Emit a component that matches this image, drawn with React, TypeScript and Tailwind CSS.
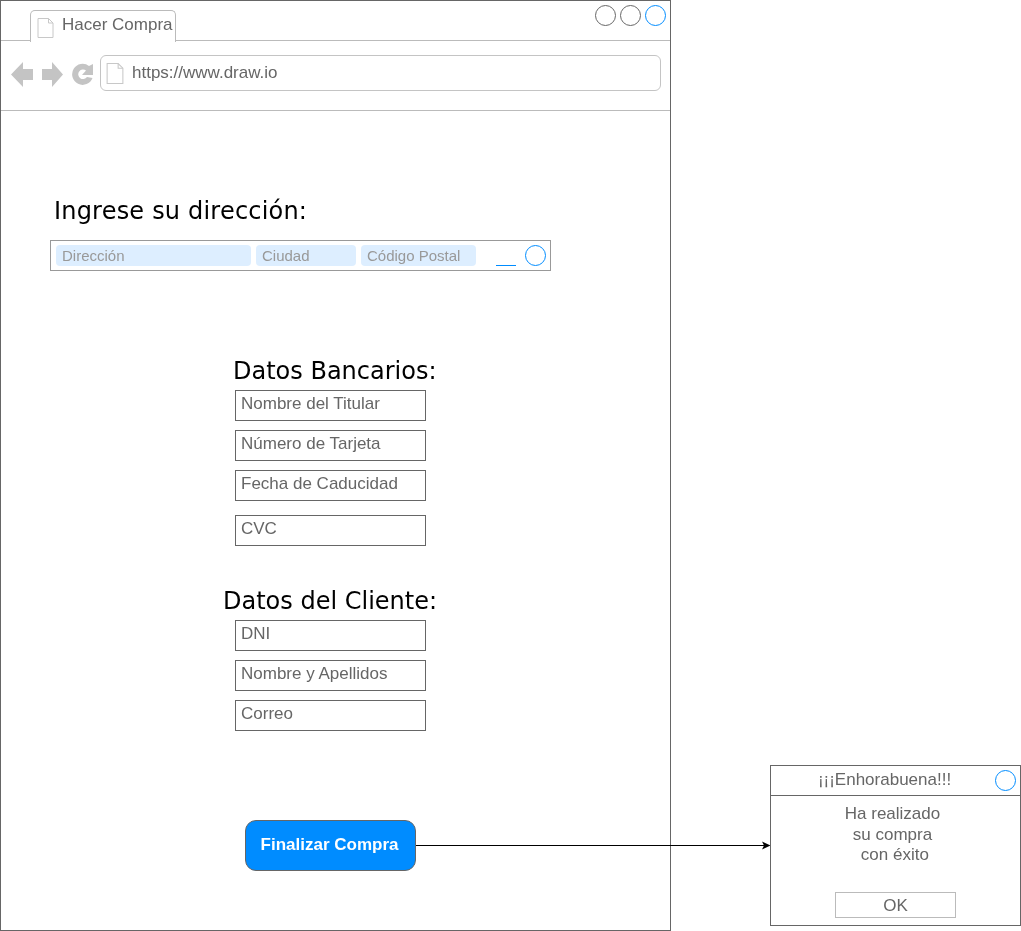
const SANS = 'font-["Liberation_Sans",Arial,sans-serif]';

function PageIcon({ className }: { className: string }) {
  return (
    <svg className={className} viewBox="0 0 17 20" fill="none">
      <path d="M1 .5H11.5L16 5V19.5H1Z" fill="#fff" stroke="#c8c8c8" strokeWidth="1" />
      <path d="M11.5 .5V5H16" stroke="#c8c8c8" strokeWidth="1" />
    </svg>
  );
}

function Circle({ blue }: { blue?: boolean }) {
  return (
    <div className={`w-[21px] h-[21px] rounded-full border ${blue ? 'border-[#008cff]' : 'border-[#666]'}`} />
  );
}

function NavIcons() {
  return (
    <svg width="83" height="26" viewBox="0 0 83 26" className="shrink-0 mt-[7px]">
      <path d="M0 12.5 12 0V7H22V18H12V25Z" fill="#c4c4c4" />
      <path d="M52 12.5 41 0V7H31V18H41V25Z" fill="#c4c4c4" />
      <path d="M82 2V13H71L75 8.5A4.8 4.8 0 1 0 76 15L81.5 16A10.5 10.5 0 1 1 78 4Z" fill="#c4c4c4" />
    </svg>
  );
}

function Heading({ children, className }: { children: string; className: string }) {
  return (
    <h2 className={`font-["DejaVu_Sans",Verdana,sans-serif] text-[24px] leading-[30px] text-black whitespace-nowrap ${className}`}>
      {children}
    </h2>
  );
}

function Field({ label, className = '' }: { label: string; className?: string }) {
  return (
    <div className={`w-[191px] h-[31px] border border-[#666] px-[5px] text-[17px] leading-[26px] text-[#666] whitespace-nowrap ${className}`}>
      {label}
    </div>
  );
}

function Pill({ label, className }: { label: string; className: string }) {
  return (
    <div className={`h-[21px] shrink-0 rounded-[4px] bg-[#ddeeff] px-[6px] text-[15px] leading-[21px] text-[#999] ${className}`}>
      {label}
    </div>
  );
}

export default function App() {
  return (
    <div className={`relative w-[1021px] h-[931px] overflow-hidden will-change-transform ${SANS}`}>
      {/* browser window */}
      <div className="absolute left-0 top-0 w-[671px] h-[931px] border border-[#666] flex flex-col">
        <div className="relative h-[40px] border-b border-[#bbb] shrink-0">
          <div className="absolute left-[29px] top-[9px] w-[146px] h-[32px] border border-b-0 border-[#bbb] rounded-t-[5px] bg-white flex items-center pl-[6px] gap-[8px] text-[17px] text-[#666] whitespace-nowrap">
            <PageIcon className="w-[17px] h-[20px] shrink-0 mt-[2px]" />
            <span className="-mt-[3px]">Hacer Compra</span>
          </div>
          <div className="absolute right-[4px] top-[4px] flex gap-[4px]">
            <Circle />
            <Circle />
            <Circle blue />
          </div>
        </div>
        <div className="h-[70px] border-b border-[#bbb] shrink-0 flex items-start pt-[14px] pl-[10px] pr-[9px] gap-[6px]">
          <NavIcons />
          <div className="flex-1 h-[36px] border border-[#c4c4c4] rounded-[6px] flex items-center pl-[5px] gap-[8px] text-[17px] text-[#666]">
            <PageIcon className="w-[18px] h-[21px] shrink-0" />
            <span>https://www.draw.io</span>
          </div>
        </div>

        <div className="flex-1 relative">
          <div className="pt-[85px] pl-[49px]">
            <Heading className="pl-[4px] tracking-[0.2px]">Ingrese su dirección:</Heading>
            <div className="mt-[14px] w-[501px] h-[31px] border border-[#999] flex items-center pl-[5px] gap-[5px]">
              <Pill label="Dirección" className="w-[195px]" />
              <Pill label="Ciudad" className="w-[100px]" />
              <Pill label="Código Postal" className="w-[115px]" />
              <div className="ml-[15px] w-[20px] h-[20px] border-b border-[#008cff]" />
              <div className="ml-[4px]">
                <Circle blue />
              </div>
            </div>
          </div>

          <div className="pl-[234px] mt-[85px] flex flex-col items-start">
            <Heading className="-ml-[2px] mb-[4px]">Datos Bancarios:</Heading>
            <div className="flex flex-col gap-[9px]">
              <Field label="Nombre del Titular" />
              <Field label="Número de Tarjeta" />
              <Field label="Fecha de Caducidad" />
              <Field label="CVC" className="mt-[5px]" />
            </div>
            <Heading className="-ml-[12px] mt-[40px] mb-[4px]">Datos del Cliente:</Heading>
            <div className="flex flex-col gap-[9px]">
              <Field label="DNI" />
              <Field label="Nombre y Apellidos" />
              <Field label="Correo" />
            </div>
            <button className="ml-[10px] mt-[89px] w-[171px] h-[51px] pb-[2px] pr-[2px] rounded-[11px] border border-[#666] bg-[#008cff] text-white font-bold text-[17px]">
              Finalizar Compra
            </button>
          </div>
        </div>
      </div>

      {/* connector */}
      <svg className="absolute left-[416px] top-[839px]" width="355" height="12" viewBox="0 0 355 12">
        <path d="M0 6.5H348" stroke="#000" strokeWidth="1" />
        <path d="M354.5 6.5 346 2.5 348 6.5 346 10.5Z" fill="#000" />
      </svg>

      {/* popup */}
      <div className="absolute left-[770px] top-[765px] w-[251px] h-[161px] border border-[#666] flex flex-col text-[#666] text-[17px]">
        <div className="relative h-[30px] border-b border-[#666] shrink-0 pr-[22px] text-center leading-[27px]">
          ¡¡¡Enhorabuena!!!
          <div className="absolute right-[4px] top-[4px]">
            <Circle blue />
          </div>
        </div>
        <div className="pt-[8px] pr-[6px] text-center leading-[20.5px] h-[96px]">
          <p>Ha realizado</p>
          <p>su compra</p>
          <p>&nbsp;con éxito</p>
        </div>
        <div className="mx-auto w-[121px] h-[26px] border border-[#bbb] text-center leading-[26px]">
          OK
        </div>
      </div>
    </div>
  );
}
